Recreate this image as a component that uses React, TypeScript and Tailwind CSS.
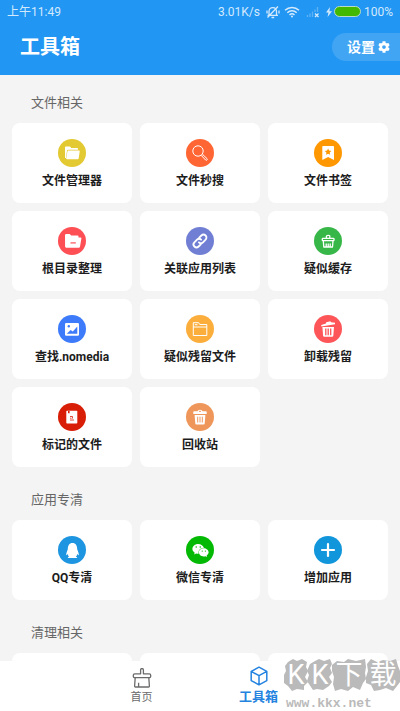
import type { ReactNode } from "react";
import { FaCog, FaQq, FaWeixin } from "react-icons/fa";

interface Tool {
  label: string;
  color: string;
  glyph: ReactNode;
}

interface ToolSection {
  title: string;
  tools: Tool[];
}

const sections: ToolSection[] = [
  {
    title: "文件相关",
    tools: [
      { label: "文件管理器", color: "bg-[#e3c932]", glyph: <FolderGlyph /> },
      { label: "文件秒搜", color: "bg-[#ff6633]", glyph: <SearchGlyph /> },
      { label: "文件书签", color: "bg-[#ff9800]", glyph: <BookmarkGlyph /> },
      { label: "根目录整理", color: "bg-[#fd4f54]", glyph: <RootFolderGlyph /> },
      { label: "关联应用列表", color: "bg-[#707fd3]", glyph: <LinkGlyph /> },
      { label: "疑似缓存", color: "bg-[#38b749]", glyph: <BasketGlyph /> },
      { label: "查找.nomedia", color: "bg-[#3d7bfa]", glyph: <ImageGlyph /> },
      { label: "疑似残留文件", color: "bg-[#fbae3c]", glyph: <OutlineFolderGlyph /> },
      { label: "卸载残留", color: "bg-[#fd5558]", glyph: <TiltedBinGlyph /> },
      { label: "标记的文件", color: "bg-[#d81e06]", glyph: <MarkedFileGlyph /> },
      { label: "回收站", color: "bg-[#ef975a]", glyph: <BinGlyph /> },
    ],
  },
  {
    title: "应用专清",
    tools: [
      { label: "QQ专清", color: "bg-[#1e95e0]", glyph: <FaQq className="size-[15px]" /> },
      { label: "微信专清", color: "bg-[#04b904]", glyph: <FaWeixin className="size-[17px]" /> },
      { label: "增加应用", color: "bg-[#1296db]", glyph: <PlusGlyph /> },
    ],
  },
  // not loaded yet, shows blank cards
  { title: "清理相关", tools: [] },
];

export default function App() {
  return (
    <div className="relative flex h-screen flex-col overflow-hidden bg-[#f4f4f4] font-[Roboto,'Noto_Sans_CJK_SC',sans-serif]">
      <header className="shrink-0 bg-[#2196f3] text-white">
        <StatusBar />
        <div className="flex items-center justify-between pt-2.5 pb-3.5 pl-5">
          <h1 className="text-xl leading-7 font-bold">工具箱</h1>
          <button
            type="button"
            className="flex h-7 items-center gap-[3px] rounded-l-full bg-white/15 pr-2.5 pl-[15px] text-sm font-bold"
          >
            设置
            <FaCog className="size-3" />
          </button>
        </div>
      </header>

      <main className="flex min-h-0 flex-1 flex-col gap-[13px] overflow-hidden px-3 pt-2">
        {sections.map((section) => (
          <section key={section.title} className="shrink-0">
            <h2 className="pl-[19px] text-[13px] leading-10 text-[#666666]">{section.title}</h2>
            <div className="grid grid-cols-3 gap-2">
              {section.tools.map((tool) => (
                <ToolCard key={tool.label} tool={tool} />
              ))}
              {section.tools.length === 0 &&
                [0, 1, 2].map((slot) => <div key={slot} className="h-20 rounded-lg bg-white" />)}
            </div>
          </section>
        ))}
      </main>

      <BottomNav />
      <Watermark />
    </div>
  );
}

function ToolCard({ tool }: { tool: Tool }) {
  return (
    <button type="button" className="flex h-20 flex-col items-center rounded-lg bg-white pt-4">
      <span className={`flex size-7 items-center justify-center rounded-full text-white ${tool.color}`}>
        {tool.glyph}
      </span>
      <span className="text-xs leading-7 font-bold text-[#1c1c1c]">{tool.label}</span>
    </button>
  );
}

function StatusBar() {
  return (
    <div className="flex h-[23px] items-center justify-between px-[7px] text-xs text-[#d3e9fc]">
      <span>上午11:49</span>
      <div className="flex items-center">
        <span>3.01K/s</span>
        {/* muted bell */}
        <svg className="ml-1.5 h-3.5 w-[14px]" viewBox="0 0 14 14" fill="none" stroke="currentColor" strokeWidth="1.3">
          <path d="M3 10V6.500C3 4 4.500 2.600 6.800 2.600S10.500 4 10.500 6.500V10M1.500 10.300H12M5.500 12.500H8.200M1.500 12.500L12 1.500M1 5.500v3M13 5.500v3" />
        </svg>
        <svg className="ml-1 h-3 w-[16px]" viewBox="0 0 16 12" fill="none" stroke="currentColor" strokeWidth="1.5">
          <path d="M1 4.300C5 .4 11 .4 15 4.300M3.300 6.700C6 4.100 10 4.100 12.700 6.700M5.500 9C7 7.600 9 7.600 10.500 9" />
          <circle cx="8" cy="10.500" r="1" fill="currentColor" stroke="none" />
        </svg>
        <svg className="ml-1.5 h-3 w-[14px]" viewBox="0 0 14 12" fill="none" stroke="currentColor">
          <path d="M1.500 9v2M4 7.500V11M6.500 5.500V11M9 3.500V6M11.500 1v5" strokeWidth="1.300" opacity=".35" />
          <path d="M9 7.500l3.500 3.500M12.500 7.500L9 11" strokeWidth="1.300" />
        </svg>
        <svg className="ml-1.5 h-2.5 w-[6px]" viewBox="0 0 6 10" fill="currentColor">
          <path d="M4 0L0 5.500h2.400L1.600 10 6 4.200H3.400z" />
        </svg>
        <span className="ml-0.5 h-[11px] w-[27px] rounded-full border border-[#b9dcc9] bg-[#43b800]" />
        <span className="ml-[3px]">100%</span>
      </div>
    </div>
  );
}

function BottomNav() {
  return (
    <nav className="flex h-[50px] shrink-0 justify-center gap-[77px] bg-white">
      <a href="#home" className="flex w-10 flex-col items-center pt-[7px] text-[#6b6b6b]">
        <svg className="size-5" viewBox="0 0 20 20" fill="none" stroke="currentColor" strokeWidth="1.300" strokeLinejoin="round">
          <path d="M8.600 5.800V1.900a1.400 1.400 0 0 1 2.800 0V5.800H17.300a1.400 1.400 0 0 1 1.400 1.400V8.200A1.400 1.400 0 0 1 17.300 9.600H2.700A1.400 1.400 0 0 1 1.300 8.200V7.200A1.400 1.400 0 0 1 2.700 5.800z" />
          <path d="M3.200 9.600L2.600 18.200a.8.800 0 0 0 .8.800H16.600a.8.800 0 0 0 .8-.8L16.800 9.600M6.600 19V14.800" />
        </svg>
        <span className="text-[11px] leading-5">首页</span>
      </a>
      <a href="#tools" aria-current="page" className="flex w-10 flex-col items-center pt-[5px] text-[#2583e0]">
        <svg className="size-5" viewBox="0 0 20 20" fill="none" stroke="currentColor" strokeWidth="1.500" strokeLinejoin="round">
          <path d="M10 1.200L17.800 5.400V14.600L10 18.800L2.200 14.600V5.400zM2.200 5.400L10 9.700L17.800 5.400M10 9.700V18.800" />
        </svg>
        <span className="text-[13px] leading-[22px] font-bold">工具箱</span>
      </a>
    </nav>
  );
}

function Watermark() {
  return (
    <div className="pointer-events-none absolute right-0 bottom-0 w-[116px]">
      <svg className="h-8 w-full" viewBox="0 0 116 32" fill="#bababa">
        <path d="M1 7L4 3L9 0L13 2L18 0L23 3L22 8L24 12L21 18L24 23L20 27L20 31L13 30L8 32L4 27L0 24L0 16L2 12z" />
        <path d="M26 5L31 2L35 0L40 2L46 0L48 5L46 9L48 14L45 18L48 23L45 27L39 31L33 30L29 31L25 25L23 22L25 16L23 12z" />
        <path d="M48 6L53 2L60 3L64 0L72 2L81 0L82 8L81 14L82 20L79 24L76 31L69 28L64 32L57 30L51 32L49 25L50 18L48 12z" />
        <path d="M83 5L87 0L93 3L99 1L106 2L112 0L114 7L116 12L116 18L116 23L113 27L109 32L102 29L96 31L90 32L87 26L82 24L82 18L84 12z" />
      </svg>
      <div className="absolute inset-x-0 top-0 grid grid-cols-[24px_24px_34px_34px] text-center text-[27px] leading-8 text-white">
        <span>K</span>
        <span>K</span>
        <span>下</span>
        <span>载</span>
      </div>
      <p className="pt-1.5 pl-0.5 font-['Liberation_Mono',monospace] text-[13px] leading-[14px] font-bold text-[#bababa]">
        www.kkx.net
      </p>
    </div>
  );
}

function Glyph({ children }: { children: ReactNode }) {
  return (
    <svg className="size-7" viewBox="0 0 28 28" fill="none" stroke="none">
      {children}
    </svg>
  );
}

function FolderGlyph() {
  return (
    <Glyph>
      <path d="M7 19V8.200Q7 7.400 7.800 7.400H12L13.300 9H19.200Q20 9 20 9.800V10.700H10.200Q9.200 10.700 9 11.700L8 19z" fill="white" />
      <path d="M10.500 11.600H21Q21.800 11.600 21.700 12.400L20.700 19.200Q20.600 20.200 19.600 20.200H9Q8 20.200 8.200 19.200L9.400 12.500Q9.600 11.600 10.500 11.600z" fill="white" />
    </Glyph>
  );
}

function SearchGlyph() {
  return (
    <Glyph>
      <g stroke="white" strokeWidth="1">
        <circle cx="12" cy="12" r="5.200" />
        <path d="M15.600 16.800L16.800 15.600L21 19.600A.9.900 0 0 1 19.600 21z" />
      </g>
    </Glyph>
  );
}

function BookmarkGlyph() {
  return (
    <Glyph>
      <path d="M9 7H19.200Q20 7 20 7.800V21L14.100 17.900L8.300 21V7.800Q8.300 7 9 7z" fill="white" />
      <path d="M14.100 9.500l1 2.100 2.300.3-1.700 1.600.4 2.300-2-1.100-2.100 1.100.4-2.300-1.600-1.600 2.300-.3z" fill="#ff9800" />
    </Glyph>
  );
}

function RootFolderGlyph() {
  return (
    <Glyph>
      <path d="M7 8.200Q7 7 8.200 7H11.700L13.200 8.500H19.500Q20.500 8.500 20.500 9.500V10.400H22.700Q23.600 10.400 23.400 11.300L22 19.700Q21.800 20.700 20.800 20.700H8.200Q7.100 20.700 7.100 19.600z" fill="white" />
      <path d="M12.500 15.900H17.800" stroke="#fd4f54" strokeWidth="1.200" />
    </Glyph>
  );
}

function LinkGlyph() {
  return (
    <Glyph>
      <g stroke="white" strokeWidth="1.800" strokeLinecap="round" strokeLinejoin="round">
        <path d="M13.200 10.700L15.400 8.500a2.900 2.900 0 0 1 4.200 4.200L17 15.300a2.900 2.900 0 0 1-4.100 0" />
        <path d="M14.800 17.300L12.600 19.500a2.900 2.900 0 0 1-4.200-4.200L11 12.700a2.900 2.900 0 0 1 4.100 0" />
      </g>
    </Glyph>
  );
}

function BasketGlyph() {
  return (
    <Glyph>
      <g stroke="white" strokeWidth="1.300" strokeLinejoin="round">
        <path d="M12.400 11.300V9.300Q12.400 8.300 14.100 8.300T15.800 9.300V11.300" />
        <rect x="8.300" y="11.300" width="11.700" height="2.300" rx=".6" />
        <path d="M9.300 13.800L9.800 20H18.500L19 13.800M12.200 20V16.500M14.200 20V16.500M16.200 20V16.500" />
      </g>
    </Glyph>
  );
}

function ImageGlyph() {
  return (
    <Glyph>
      <rect x="7" y="8" width="14" height="12.800" rx="1.200" fill="white" />
      <circle cx="10.800" cy="11.200" r="1.200" fill="#3d7bfa" />
      <path d="M8.700 18.800L12.600 14.900L14.800 16.400L19.300 11.600V18.800z" fill="#3d7bfa" />
    </Glyph>
  );
}

function OutlineFolderGlyph() {
  return (
    <Glyph>
      <path d="M7.300 20.500V7.700H12.600L13.800 9.500H20.800V20.500zM7.300 12H20.800M8.800 9.700H11.500" stroke="white" strokeWidth="1" />
    </Glyph>
  );
}

function TiltedBinGlyph() {
  return (
    <Glyph>
      <path d="M7.200 10L12 8.400L12.200 7.200L16.400 6.200L17 7.200L21 7.700V9.200L7.400 11.600z" fill="white" />
      <path d="M8.400 11.900H20L19.300 20.800Q19.200 21.800 18.200 21.800H10.200Q9.200 21.800 9.100 20.800z" fill="white" />
      <path d="M11.800 13.500V20.200M14.200 13.500V20.200M16.700 13.500V20.200" stroke="#fd5558" strokeWidth="1.300" />
    </Glyph>
  );
}

function MarkedFileGlyph() {
  return (
    <Glyph>
      <path d="M8.300 8.500Q8.300 7.800 9 7.800H18.500Q19.300 7.800 19.300 8.500V19.700Q19.300 20.500 18.500 20.500H9Q8.300 20.500 8.300 19.700z" fill="white" />
      <path d="M10 8V10.600L10.800 10L11.600 10.600V8z" fill="#d81e06" />
      <path d="M12 13.500H14.500V15.500M12 15.200H13.500M12 17H16" stroke="#d81e06" strokeWidth=".8" />
    </Glyph>
  );
}

function BinGlyph() {
  return (
    <Glyph>
      <path d="M11.500 8.300Q11.700 6.700 14 6.700T16.500 8.300H20Q20.700 8.300 20.700 9V11H7.300V9Q7.300 8.300 8 8.300z" fill="white" />
      <path d="M8.600 11.900H19.400L18.700 20.500Q18.600 21.500 17.600 21.500H10.400Q9.400 21.500 9.300 20.500z" fill="white" />
      <path d="M11.700 13.700V19.500M14 13.700V19.500M16.300 13.700V19.500M13 8.300H15" stroke="#ef975a" strokeWidth="1" />
    </Glyph>
  );
}

function PlusGlyph() {
  return (
    <Glyph>
      <path d="M14 8V20M8 14H20" stroke="white" strokeWidth="2.200" strokeLinecap="round" />
    </Glyph>
  );
}
